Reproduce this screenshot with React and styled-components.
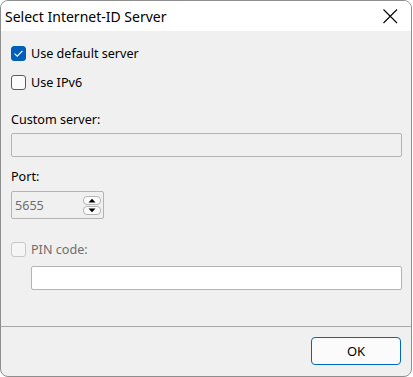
import React from "react";
import styled, { createGlobalStyle } from "styled-components";

const Global = createGlobalStyle`
  html, body { margin: 0; padding: 0; background: #ffffff; }
  body { font-family: "Noto Sans", "Open Sans", sans-serif; }
`;

const Window = styled.div`
  box-sizing: border-box;
  width: 412px;
  height: 377px;
  border: 1px solid #8e8e8e;
  border-radius: 8px;
  overflow: hidden;
  display: flex;
  flex-direction: column;
  background: #f0f0f0;
`;

const TitleBar = styled.div`
  height: 30px;
  background: #ffffff;
  display: flex;
  align-items: center;
  justify-content: space-between;
  padding: 0 13px 0 4px;
  flex-shrink: 0;
`;

const Title = styled.div`
  font-size: 14px;
  color: #000;
`;

const Content = styled.div`
  height: 295px;
  box-sizing: border-box;
  padding: 12px 9px 0 10px;
  display: flex;
  flex-direction: column;
  font-size: 12.6px;
  flex-shrink: 0;
`;

const CheckRow = styled.label`
  display: flex;
  align-items: center;
  gap: 5px;
  height: 20px;
  margin-top: ${(p) => p.$mt || 0}px;
  color: ${(p) => (p.$disabled ? "#6d6d6d" : "#000")};
`;

const Box = styled.span`
  box-sizing: border-box;
  width: 15px;
  height: 15px;
  border-radius: 3px;
  display: inline-flex;
  align-items: center;
  justify-content: center;
  background: ${(p) => (p.$checked ? "#005fb8" : p.$disabled ? "#f5f5f5" : "#fbfbfb")};
  border: 1px solid
    ${(p) => (p.$checked ? "#005fb8" : p.$disabled ? "#c8c8c8" : "#5c5c5c")};
`;

const Label = styled.div`
  height: 20px;
  display: flex;
  align-items: center;
  margin-top: ${(p) => p.$mt || 0}px;
  color: #000;
`;

const Field = styled.div`
  box-sizing: border-box;
  height: 24px;
  margin-top: ${(p) => p.$mt || 0}px;
  margin-left: ${(p) => p.$ml || 0}px;
  border: 1px solid #b4b4b4;
  border-radius: 2px;
  background: ${(p) => (p.$white ? "#ffffff" : "#f0f0f0")};
`;

const Spin = styled.div`
  box-sizing: border-box;
  width: 93px;
  height: 28px;
  margin-top: 5px;
  border: 1px solid #b4b4b4;
  border-radius: 2px;
  display: flex;
  align-items: center;
  justify-content: space-between;
  padding: 0 2px 0 3px;
  color: #6d6d6d;
`;

const SpinButtons = styled.div`
  display: flex;
  flex-direction: column;
  gap: 1px;
`;

const SpinBtn = styled.div`
  box-sizing: border-box;
  width: 18px;
  height: 9px;
  border: 1px solid #b4b4b4;
  border-radius: 4px;
  background: #fbfbfb;
  display: flex;
  align-items: center;
  justify-content: center;
`;

const Footer = styled.div`
  flex: 1;
  border-top: 1px solid #a8a8a8;
  display: flex;
  justify-content: flex-end;
  align-items: flex-start;
  padding: 10px 10px 0 0;
`;

const Button = styled.button`
  box-sizing: border-box;
  width: 90px;
  height: 28px;
  border: 1px solid #0067c0;
  border-radius: 4px;
  background: #fbfbfb;
  font-family: inherit;
  font-size: 13px;
  color: #000;
  padding: 0;
`;

const Check = () => (
  <svg width="11" height="9" viewBox="0 0 11 9">
    <path d="M1.5 4.6 L4.2 7.2 L9.5 1.8" fill="none" stroke="#fff" strokeWidth="1.2" />
  </svg>
);

const Up = () => (
  <svg width="8" height="5" viewBox="0 0 8 5">
    <path d="M0.5 4.5 L4 0.8 L7.5 4.5 Z" fill="#000" />
  </svg>
);
const Down = () => (
  <svg width="8" height="5" viewBox="0 0 8 5">
    <path d="M0.5 0.5 L4 4.2 L7.5 0.5 Z" fill="#000" />
  </svg>
);

export default function App() {
  return (
    <>
      <Global />
      <Window>
        <TitleBar>
          <Title>Select Internet-ID Server</Title>
          <svg width="15" height="15" viewBox="0 0 15 15">
            <path d="M0.5 0.5 L14 14 M14 0.5 L0.5 14" stroke="#000" strokeWidth="1.1" />
          </svg>
        </TitleBar>
        <Content>
          <CheckRow>
            <Box $checked>
              <Check />
            </Box>
            Use default server
          </CheckRow>
          <CheckRow $mt={9}>
            <Box />
            Use IPv6
          </CheckRow>
          <Label $mt={17}>Custom server:</Label>
          <Field $mt={4} />
          <Label $mt={9}>Port:</Label>
          <Spin>
            5655
            <SpinButtons>
              <SpinBtn>
                <Up />
              </SpinBtn>
              <SpinBtn>
                <Down />
              </SpinBtn>
            </SpinButtons>
          </Spin>
          <CheckRow $mt={20} $disabled>
            <Box $disabled />
            PIN code:
          </CheckRow>
          <Field $mt={7} $ml={20} $white />
        </Content>
        <Footer>
          <Button>OK</Button>
        </Footer>
      </Window>
    </>
  );
}
